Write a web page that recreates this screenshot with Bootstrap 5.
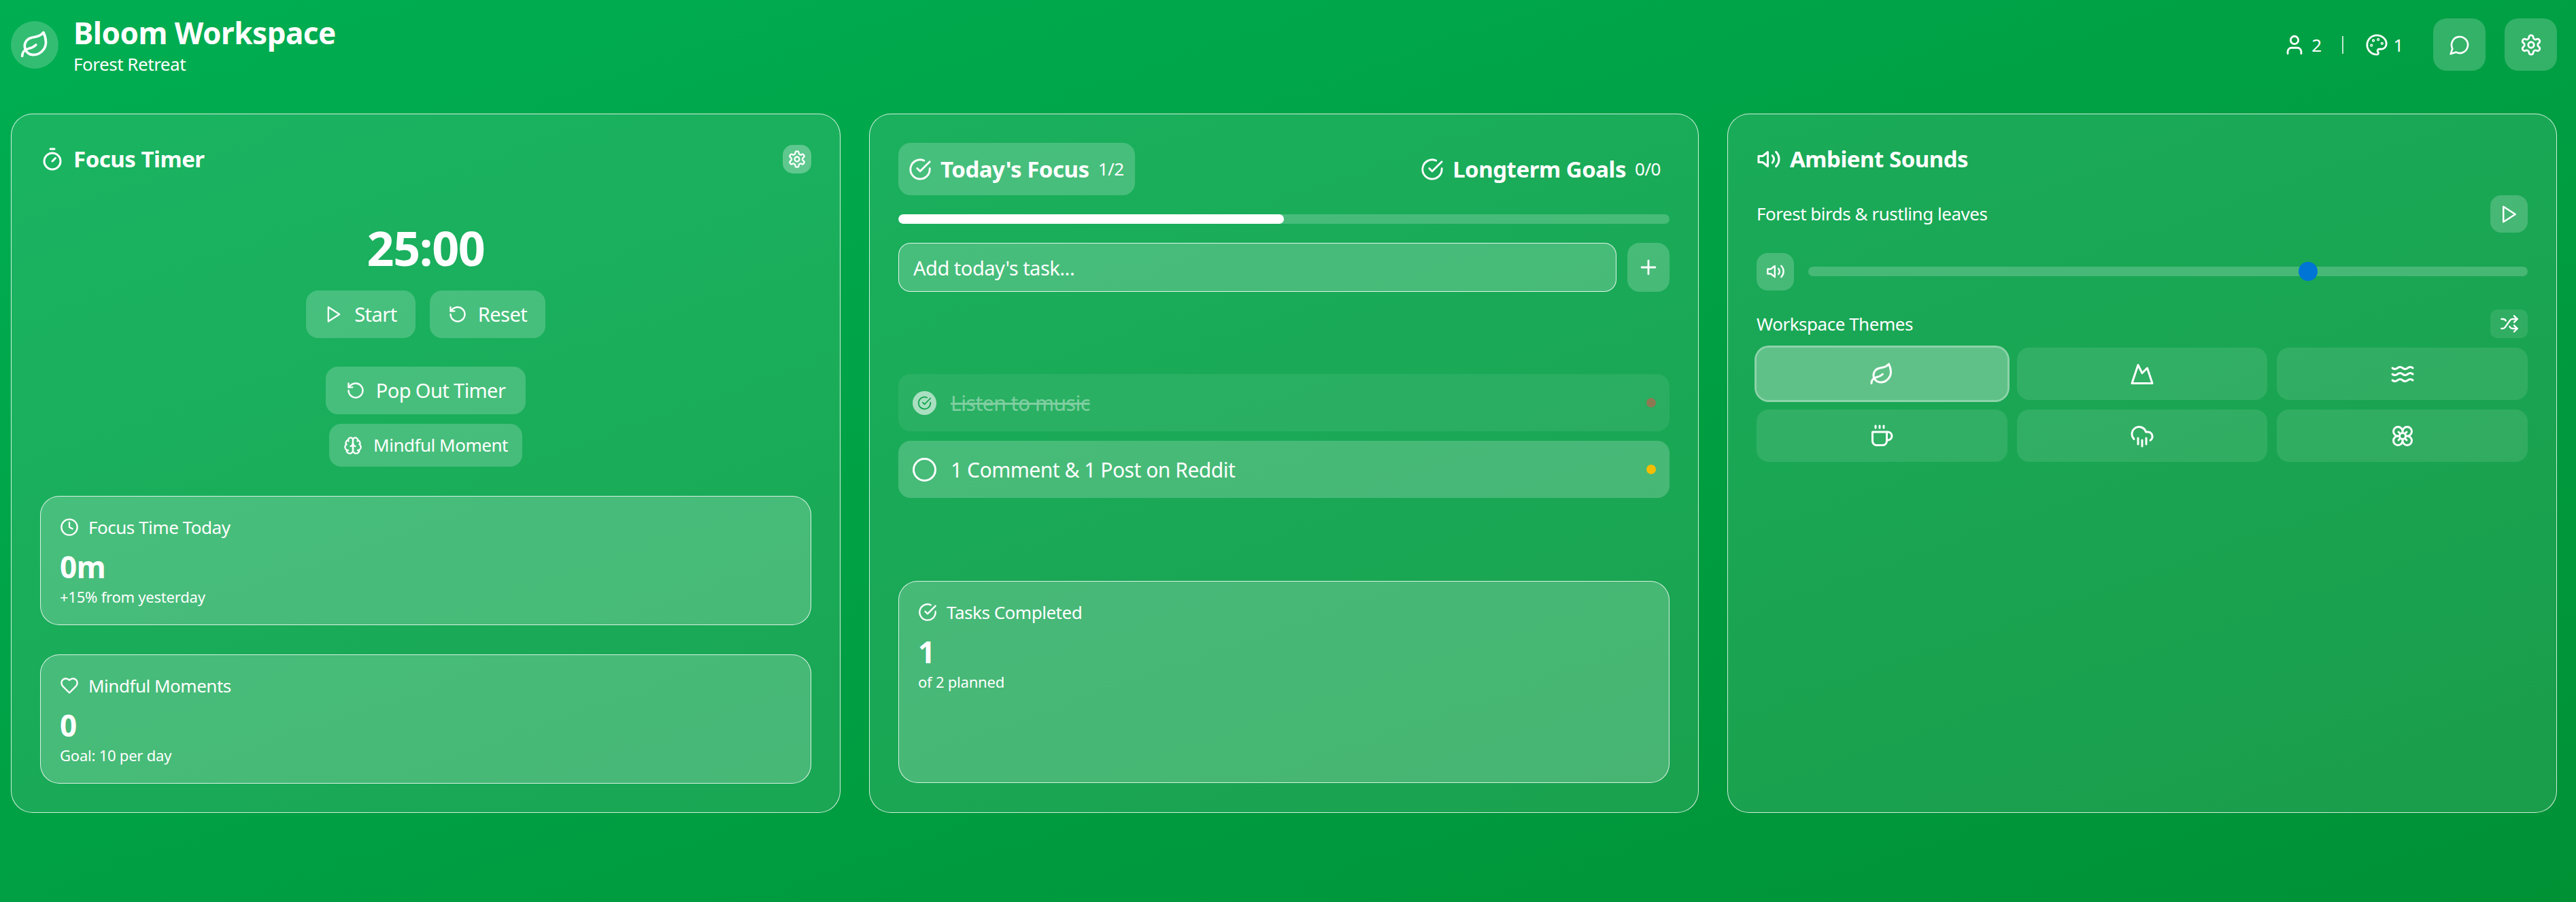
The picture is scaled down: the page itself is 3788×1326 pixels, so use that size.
<!DOCTYPE html>
<html lang="en">
<head>
    <meta charset="UTF-8">
    <meta name="viewport" content="width=device-width, initial-scale=1.0">
    <title>Bloom Workspace</title>
    <link href="https://cdn.jsdelivr.net/npm/bootstrap@5.3.3/dist/css/bootstrap.min.css" rel="stylesheet">
    <style>
        html, body { height: 100%; }
        body {
            min-height: 1326px;
            overflow: hidden;
            background: linear-gradient(to bottom right, #00ae52, #009135);
            font-family: "Noto Sans", "Open Sans", sans-serif;
            color: #fff;
            letter-spacing: -0.03em;
        }
        .ico { width: 24px; height: 24px; fill: none; stroke: currentColor; stroke-width: 2; stroke-linecap: round; stroke-linejoin: round; flex-shrink: 0; }
        .ico-21 { width: 21px; height: 21px; }
        .ico-28 { width: 28px; height: 28px; }
        .ico-30 { width: 30px; height: 30px; }
        .ico-32 { width: 32px; height: 32px; }
        .ico-34 { width: 34px; height: 34px; }
        .ico-36 { width: 36px; height: 36px; }
        .ico-44 { width: 44px; height: 44px; }

        .page-wrap { padding: 27px 28px 0 16px; }
        .top-bar { height: 77px; margin-bottom: 63px; }
        .logo-disc { width: 70px; height: 70px; border-radius: 50%; background: rgba(255,255,255,.2); margin-right: 22px; }
        .brand-text { padding-top: 1px; }
        .brand-title { font-size: 44px; line-height: 52px; font-weight: 700; margin: 0 0 4px; }
        .brand-sub { font-size: 26px; line-height: 32px; }
        .stat-count { font-size: 26px; line-height: 32px; margin-left: 8px; }
        .stat-sep { width: 2px; height: 26px; background: rgba(255,255,255,.75); margin: 0 32px 0 30px; }
        .square-btn { width: 77px; height: 77px; padding: 0; border: 0; border-radius: 20px; background: rgba(255,255,255,.2); color: #fff; }
        .chat-btn { margin-left: 44px; }
        .gear-btn { margin-left: 28px; }

        .panel-grid { display: grid; grid-template-columns: repeat(3, 1220px); column-gap: 42px; }
        .glass-panel {
            height: 1028px;
            padding: 42px 42px 43px;
            background: rgba(255,255,255,.1);
            border: 1px solid rgba(255,255,255,.8);
            border-radius: 32px;
            color: #fff;
        }
        .panel-head { height: 48px; gap: 13px; }
        .panel-title { font-size: 33px; line-height: 48px; font-weight: 700; margin: 0; }
        .mini-btn { width: 42px; height: 42px; padding: 0; border: 0; border-radius: 15px; background: rgba(255,255,255,.3); color: #fff; }

        .timer-value { font-size: 70px; line-height: 96px; font-weight: 700; letter-spacing: -0.02em; margin-top: 58px; margin-bottom: 15px; }
        .glass-btn { background: rgba(255,255,255,.2); border: 0; border-radius: 18px; color: #fff; font-size: 29px; height: 70px; padding: 0; gap: 16px; justify-content: center; letter-spacing: inherit; }
        .start-btn { width: 161px; }
        .reset-btn { width: 170px; margin-left: 21px; }
        .pop-btn { width: 294px; margin-top: 42px; letter-spacing: -0.02em; }
        .mindful-btn { width: 284px; height: 63px; margin-top: 14px; font-size: 26px; }

        .stat-box {
            padding: 29px 28px 27px;
            background: rgba(255,255,255,.2);
            border: 1px solid rgba(255,255,255,.8);
            border-radius: 28px;
            color: #fff;
        }
        .stat-gap { margin-top: 43px; }
        .stat-label { font-size: 26px; line-height: 32px; gap: 14px; }
        .stat-num { font-size: 44px; line-height: 56px; font-weight: 700; margin-top: 14px; }
        .stat-note { font-size: 22px; line-height: 28px; letter-spacing: -0.01em; margin-top: 2px; }

        .tab-row { height: 77px; }
        .tab-item { height: 77px; padding: 0 13px 0 15px; gap: 13px; border-radius: 18px; }
        .tab-item.is-on { background: rgba(255,255,255,.2); padding-right: 16px; }
        .tab-name { font-size: 33px; font-weight: 700; }
        .tab-count { font-size: 26px; }
        .goal-bar { height: 14px; margin-top: 28px; background: rgba(255,255,255,.2); border-radius: 7px; }
        .goal-bar .progress-bar { background: #fff; border-radius: 7px; }
        .task-form { margin-top: 28px; gap: 16px; }
        .task-input, .task-input:focus {
            height: 72px; padding: 0 21px; font-size: 29px; letter-spacing: inherit;
            background: rgba(255,255,255,.2); border: 1px solid rgba(255,255,255,.85);
            border-radius: 18px; color: #fff; box-shadow: none;
        }
        .task-input::placeholder { color: #fff; opacity: 1; }
        .add-btn { width: 62px; height: 72px; padding: 0; border: 0; border-radius: 18px; background: rgba(255,255,255,.2); color: #fff; }
        .task-list { margin-top: 121px; gap: 14px; }
        .task-row { height: 84px; padding: 0 20px 0 21px; gap: 21px; border-radius: 18px; background: rgba(255,255,255,.2); font-size: 30px; }
        .task-row.is-done { background: rgba(255,255,255,.07); }
        .task-row.is-done .task-text { text-decoration: line-through; opacity: .4; }
        .check-ring { width: 35px; height: 35px; border: 3px solid #fff; border-radius: 50%; flex-shrink: 0; }
        .check-ring.is-filled { border: 0; background: rgba(255,255,255,.6); color: #0ea34c; }
        .pri-dot { width: 14px; height: 14px; border-radius: 50%; }
        .pri-high { background: #ef4444; opacity: .5; }
        .pri-mid { background: #f5bd00; }
        .done-box { margin-top: 122px; }

        .sound-row { margin-top: 29px; height: 55px; font-size: 26px; }
        .sound-btn { width: 55px; height: 55px; padding: 0; border: 0; border-radius: 16px; background: rgba(255,255,255,.2); color: #fff; }
        .volume-row { margin-top: 29px; gap: 21px; height: 56px; }
        .volume-range { -webkit-appearance: none; appearance: none; flex: 1; height: 14px; border-radius: 7px; background: rgba(255,255,255,.2); outline: 0; }
        .volume-range::-webkit-slider-thumb { -webkit-appearance: none; width: 28px; height: 28px; border-radius: 50%; background: #0075d6; border: 0; }
        .theme-head { margin-top: 28px; height: 42px; font-size: 26px; }
        .shuffle-btn { width: 55px; height: 42px; padding: 0; border: 0; border-radius: 10px; background: rgba(255,255,255,.1); color: #fff; }
        .theme-grid { display: grid; grid-template-columns: repeat(3, 1fr); gap: 14px; margin-top: 14px; }
        .theme-btn { height: 77px; padding: 0; border: 0; border-radius: 18px; background: rgba(255,255,255,.1); color: #fff; }
        .theme-btn.is-active { background: rgba(255,255,255,.3); box-shadow: 0 0 0 3px rgba(255,255,255,.5); }
    </style>
</head>
<body>

<svg width="0" height="0" class="d-none">
    <symbol id="i-leaf" viewBox="0 0 24 24"><path d="M11 20A7 7 0 0 1 9.8 6.1C15.5 5 17 4.48 19 2c1 2 2 4.18 2 8 0 5.5-4.78 10-10 10Z"/><path d="M2 21c0-3 1.85-5.36 5.08-6C9.5 14.52 12 13 13 12"/></symbol>
    <symbol id="i-timer" viewBox="0 0 24 24"><line x1="10" x2="14" y1="2" y2="2"/><line x1="12" x2="15" y1="14" y2="11"/><circle cx="12" cy="14" r="8"/></symbol>
    <symbol id="i-gear" viewBox="0 0 24 24"><path d="M12.22 2h-.44a2 2 0 0 0-2 2v.18a2 2 0 0 1-1 1.73l-.43.25a2 2 0 0 1-2 0l-.15-.08a2 2 0 0 0-2.73.73l-.22.38a2 2 0 0 0 .73 2.73l.15.1a2 2 0 0 1 1 1.72v.51a2 2 0 0 1-1 1.74l-.15.09a2 2 0 0 0-.73 2.73l.22.38a2 2 0 0 0 2.73.73l.15-.08a2 2 0 0 1 2 0l.43.25a2 2 0 0 1 1 1.73V20a2 2 0 0 0 2 2h.44a2 2 0 0 0 2-2v-.18a2 2 0 0 1 1-1.73l.43-.25a2 2 0 0 1 2 0l.15.08a2 2 0 0 0 2.73-.73l.22-.39a2 2 0 0 0-.73-2.73l-.15-.08a2 2 0 0 1-1-1.74v-.5a2 2 0 0 1 1-1.74l.15-.09a2 2 0 0 0 .73-2.73l-.22-.38a2 2 0 0 0-2.73-.73l-.15.08a2 2 0 0 1-2 0l-.43-.25a2 2 0 0 1-1-1.73V4a2 2 0 0 0-2-2z"/><circle cx="12" cy="12" r="3"/></symbol>
    <symbol id="i-play" viewBox="0 0 24 24"><polygon points="5 3 19 12 5 21 5 3"/></symbol>
    <symbol id="i-reset" viewBox="0 0 24 24"><path d="M3 12a9 9 0 1 0 9-9 9.75 9.75 0 0 0-6.74 2.74L3 8"/><path d="M3 3v5h5"/></symbol>
    <symbol id="i-brain" viewBox="0 0 24 24"><path d="M12 5a3 3 0 1 0-5.997.125 4 4 0 0 0-2.526 5.77 4 4 0 0 0 .556 6.588A4 4 0 1 0 12 18Z"/><path d="M12 5a3 3 0 1 1 5.997.125 4 4 0 0 1 2.526 5.77 4 4 0 0 1-.556 6.588A4 4 0 1 1 12 18Z"/><path d="M15 13a4.5 4.5 0 0 1-3-4 4.5 4.5 0 0 1-3 4"/><path d="M17.599 6.5a3 3 0 0 0 .399-1.375"/><path d="M6.003 5.125A3 3 0 0 0 6.401 6.5"/><path d="M3.477 10.896a4 4 0 0 1 .585-.396"/><path d="M19.938 10.5a4 4 0 0 1 .585.396"/><path d="M6 18a4 4 0 0 1-1.967-.516"/><path d="M19.967 17.484A4 4 0 0 1 18 18"/></symbol>
    <symbol id="i-clock" viewBox="0 0 24 24"><circle cx="12" cy="12" r="10"/><polyline points="12 6 12 12 16 14"/></symbol>
    <symbol id="i-heart" viewBox="0 0 24 24"><path d="M19 14c1.49-1.46 3-3.21 3-5.5A5.5 5.5 0 0 0 16.5 3c-1.76 0-3 .5-4.5 2-1.5-1.5-2.74-2-4.5-2A5.5 5.5 0 0 0 2 8.5c0 2.3 1.5 4.05 3 5.5l7 7Z"/></symbol>
    <symbol id="i-check" viewBox="0 0 24 24"><path d="M22 11.08V12a10 10 0 1 1-5.93-9.14"/><path d="M22 4 12 14.01l-3-3"/></symbol>
    <symbol id="i-volume" viewBox="0 0 24 24"><polygon points="11 5 6 9 2 9 2 15 6 15 11 19 11 5"/><path d="M15.54 8.46a5 5 0 0 1 0 7.07"/><path d="M19.07 4.93a10 10 0 0 1 0 14.14"/></symbol>
    <symbol id="i-shuffle" viewBox="0 0 24 24"><path d="M2 18h1.4c1.3 0 2.5-.6 3.3-1.7l6.1-8.6c.7-1.1 2-1.7 3.3-1.7H22"/><path d="m18 2 4 4-4 4"/><path d="M2 6h1.9c1.5 0 2.9.9 3.6 2.2"/><path d="M22 18h-5.9c-1.3 0-2.6-.7-3.3-1.8l-.5-.8"/><path d="m18 14 4 4-4 4"/></symbol>
    <symbol id="i-mountain" viewBox="0 0 24 24"><path d="m8 3 4 8 5-5 5 15H2L8 3z"/></symbol>
    <symbol id="i-waves" viewBox="0 0 24 24"><path d="M2 6c.6.5 1.2 1 2.5 1C7 7 7 5 9.5 5c2.6 0 2.4 2 5 2 2.5 0 2.5-2 5-2 1.3 0 1.9.5 2.5 1"/><path d="M2 12c.6.5 1.2 1 2.5 1 2.5 0 2.5-2 5-2 2.6 0 2.4 2 5 2 2.5 0 2.5-2 5-2 1.3 0 1.9.5 2.5 1"/><path d="M2 18c.6.5 1.2 1 2.5 1 2.5 0 2.5-2 5-2 2.6 0 2.4 2 5 2 2.5 0 2.5-2 5-2 1.3 0 1.9.5 2.5 1"/></symbol>
    <symbol id="i-coffee" viewBox="0 0 24 24"><path d="M17 8h1a4 4 0 1 1 0 8h-1"/><path d="M3 8h14v9a4 4 0 0 1-4 4H7a4 4 0 0 1-4-4Z"/><line x1="6" x2="6" y1="2" y2="4"/><line x1="10" x2="10" y1="2" y2="4"/><line x1="14" x2="14" y1="2" y2="4"/></symbol>
    <symbol id="i-rain" viewBox="0 0 24 24"><path d="M4 14.899A7 7 0 1 1 15.71 8h1.79a4.5 4.5 0 0 1 2.5 8.242"/><path d="M16 14v6"/><path d="M8 14v6"/><path d="M12 16v6"/></symbol>
    <symbol id="i-flower" viewBox="0 0 24 24"><path d="M12 7.5a4.5 4.5 0 1 1 4.5 4.5M12 7.5A4.5 4.5 0 1 0 7.5 12M12 7.5V9m-4.5 3a4.5 4.5 0 1 0 4.5 4.5M7.5 12H9m7.5 0a4.5 4.5 0 1 1-4.5 4.5m4.5-4.5H15m-3 4.5V15"/><circle cx="12" cy="12" r="3"/><path d="m8 16 1.5-1.5"/><path d="M14.5 9.5 16 8"/><path d="m8 8 1.5 1.5"/><path d="M14.5 14.5 16 16"/></symbol>
    <symbol id="i-plus" viewBox="0 0 24 24"><path d="M5 12h14"/><path d="M12 5v14"/></symbol>
    <symbol id="i-user" viewBox="0 0 24 24"><path d="M19 21v-2a4 4 0 0 0-4-4H9a4 4 0 0 0-4 4v2"/><circle cx="12" cy="7" r="4"/></symbol>
    <symbol id="i-palette" viewBox="0 0 24 24"><circle cx="13.5" cy="6.5" r=".5"/><circle cx="17.5" cy="10.5" r=".5"/><circle cx="8.5" cy="7.5" r=".5"/><circle cx="6.5" cy="12.5" r=".5"/><path d="M12 2C6.5 2 2 6.5 2 12s4.5 10 10 10c.926 0 1.648-.746 1.648-1.688 0-.437-.18-.835-.437-1.125-.29-.289-.438-.652-.438-1.125a1.64 1.64 0 0 1 1.668-1.668h1.996c3.051 0 5.555-2.503 5.555-5.554C21.965 6.012 17.461 2 12 2z"/></symbol>
    <symbol id="i-chat" viewBox="0 0 24 24"><path d="M7.9 20A9 9 0 1 0 4 16.1L2 22Z"/></symbol>
</svg>

<div class="page-wrap">
    <header class="top-bar d-flex align-items-center justify-content-between">
        <div class="d-flex align-items-center">
            <div class="logo-disc d-flex align-items-center justify-content-center">
                <svg class="ico ico-44"><use href="#i-leaf"/></svg>
            </div>
            <div class="brand-text">
                <h1 class="brand-title">Bloom Workspace</h1>
                <div class="brand-sub">Forest Retreat</div>
            </div>
        </div>
        <div class="d-flex align-items-center">
            <svg class="ico ico-34"><use href="#i-user"/></svg>
            <span class="stat-count">2</span>
            <span class="stat-sep"></span>
            <svg class="ico ico-34"><use href="#i-palette"/></svg>
            <span class="stat-count">1</span>
            <button class="square-btn chat-btn btn d-flex align-items-center justify-content-center"><svg class="ico ico-32"><use href="#i-chat"/></svg></button>
            <button class="square-btn gear-btn btn d-flex align-items-center justify-content-center"><svg class="ico ico-34"><use href="#i-gear"/></svg></button>
        </div>
    </header>

    <main class="panel-grid">
        <!-- focus timer -->
        <section class="card glass-panel">
            <div class="panel-head d-flex align-items-center justify-content-between">
                <div class="panel-head d-flex align-items-center">
                    <svg class="ico ico-36"><use href="#i-timer"/></svg>
                    <h2 class="panel-title">Focus Timer</h2>
                </div>
                <button class="mini-btn btn d-flex align-items-center justify-content-center"><svg class="ico ico-28"><use href="#i-gear"/></svg></button>
            </div>
            <div class="timer-value text-center">25:00</div>
            <div class="d-flex justify-content-center">
                <button class="glass-btn start-btn btn d-flex align-items-center"><svg class="ico ico-28"><use href="#i-play"/></svg>Start</button>
                <button class="glass-btn reset-btn btn d-flex align-items-center"><svg class="ico ico-28"><use href="#i-reset"/></svg>Reset</button>
            </div>
            <div class="d-flex justify-content-center">
                <button class="glass-btn pop-btn btn d-flex align-items-center"><svg class="ico ico-28"><use href="#i-reset"/></svg>Pop Out Timer</button>
            </div>
            <div class="d-flex justify-content-center">
                <button class="glass-btn mindful-btn btn d-flex align-items-center"><svg class="ico ico-28"><use href="#i-brain"/></svg>Mindful Moment</button>
            </div>
            <div class="stat-box stat-gap">
                <div class="stat-label d-flex align-items-center"><svg class="ico ico-28"><use href="#i-clock"/></svg>Focus Time Today</div>
                <div class="stat-num">0m</div>
                <div class="stat-note">+15% from yesterday</div>
            </div>
            <div class="stat-box stat-gap">
                <div class="stat-label d-flex align-items-center"><svg class="ico ico-28"><use href="#i-heart"/></svg>Mindful Moments</div>
                <div class="stat-num">0</div>
                <div class="stat-note">Goal: 10 per day</div>
            </div>
        </section>

        <!-- tasks -->
        <section class="card glass-panel">
            <div class="tab-row d-flex align-items-center justify-content-between">
                <div class="tab-item is-on d-flex align-items-center">
                    <svg class="ico ico-34"><use href="#i-check"/></svg>
                    <span class="tab-name">Today's Focus</span>
                    <span class="tab-count">1/2</span>
                </div>
                <div class="tab-item d-flex align-items-center">
                    <svg class="ico ico-34"><use href="#i-check"/></svg>
                    <span class="tab-name">Longterm Goals</span>
                    <span class="tab-count">0/0</span>
                </div>
            </div>
            <div class="progress goal-bar">
                <div class="progress-bar" style="width: 50%"></div>
            </div>
            <div class="task-form d-flex">
                <input type="text" class="form-control task-input" placeholder="Add today's task...">
                <button class="add-btn btn d-flex align-items-center justify-content-center flex-shrink-0"><svg class="ico ico-34"><use href="#i-plus"/></svg></button>
            </div>
            <div class="task-list d-flex flex-column">
                <div class="task-row is-done d-flex align-items-center">
                    <span class="check-ring is-filled d-flex align-items-center justify-content-center"><svg class="ico ico-21"><use href="#i-check"/></svg></span>
                    <span class="task-text flex-grow-1">Listen to music</span>
                    <span class="pri-dot pri-high"></span>
                </div>
                <div class="task-row d-flex align-items-center">
                    <span class="check-ring"></span>
                    <span class="task-text flex-grow-1">1 Comment &amp; 1 Post on Reddit</span>
                    <span class="pri-dot pri-mid"></span>
                </div>
            </div>
            <div class="stat-box done-box flex-grow-1">
                <div class="stat-label d-flex align-items-center"><svg class="ico ico-28"><use href="#i-check"/></svg>Tasks Completed</div>
                <div class="stat-num">1</div>
                <div class="stat-note">of 2 planned</div>
            </div>
        </section>

        <!-- sounds and themes -->
        <section class="card glass-panel">
            <div class="panel-head d-flex align-items-center">
                <svg class="ico ico-36"><use href="#i-volume"/></svg>
                <h2 class="panel-title">Ambient Sounds</h2>
            </div>
            <div class="sound-row d-flex align-items-center justify-content-between">
                <span>Forest birds &amp; rustling leaves</span>
                <button class="sound-btn btn d-flex align-items-center justify-content-center"><svg class="ico ico-30"><use href="#i-play"/></svg></button>
            </div>
            <div class="volume-row d-flex align-items-center">
                <button class="sound-btn btn d-flex align-items-center justify-content-center flex-shrink-0"><svg class="ico ico-28"><use href="#i-volume"/></svg></button>
                <input type="range" class="volume-range" min="0" max="100" value="70">
            </div>
            <div class="theme-head d-flex align-items-center justify-content-between">
                <span>Workspace Themes</span>
                <button class="shuffle-btn btn d-flex align-items-center justify-content-center"><svg class="ico ico-28"><use href="#i-shuffle"/></svg></button>
            </div>
            <div class="theme-grid">
                <button class="theme-btn is-active btn d-flex align-items-center justify-content-center"><svg class="ico ico-36"><use href="#i-leaf"/></svg></button>
                <button class="theme-btn btn d-flex align-items-center justify-content-center"><svg class="ico ico-36"><use href="#i-mountain"/></svg></button>
                <button class="theme-btn btn d-flex align-items-center justify-content-center"><svg class="ico ico-36"><use href="#i-waves"/></svg></button>
                <button class="theme-btn btn d-flex align-items-center justify-content-center"><svg class="ico ico-36"><use href="#i-coffee"/></svg></button>
                <button class="theme-btn btn d-flex align-items-center justify-content-center"><svg class="ico ico-36"><use href="#i-rain"/></svg></button>
                <button class="theme-btn btn d-flex align-items-center justify-content-center"><svg class="ico ico-36"><use href="#i-flower"/></svg></button>
            </div>
        </section>
    </main>
</div>

<script src="https://cdn.jsdelivr.net/npm/bootstrap@5.3.3/dist/js/bootstrap.bundle.min.js"></script>
</body>
</html>
